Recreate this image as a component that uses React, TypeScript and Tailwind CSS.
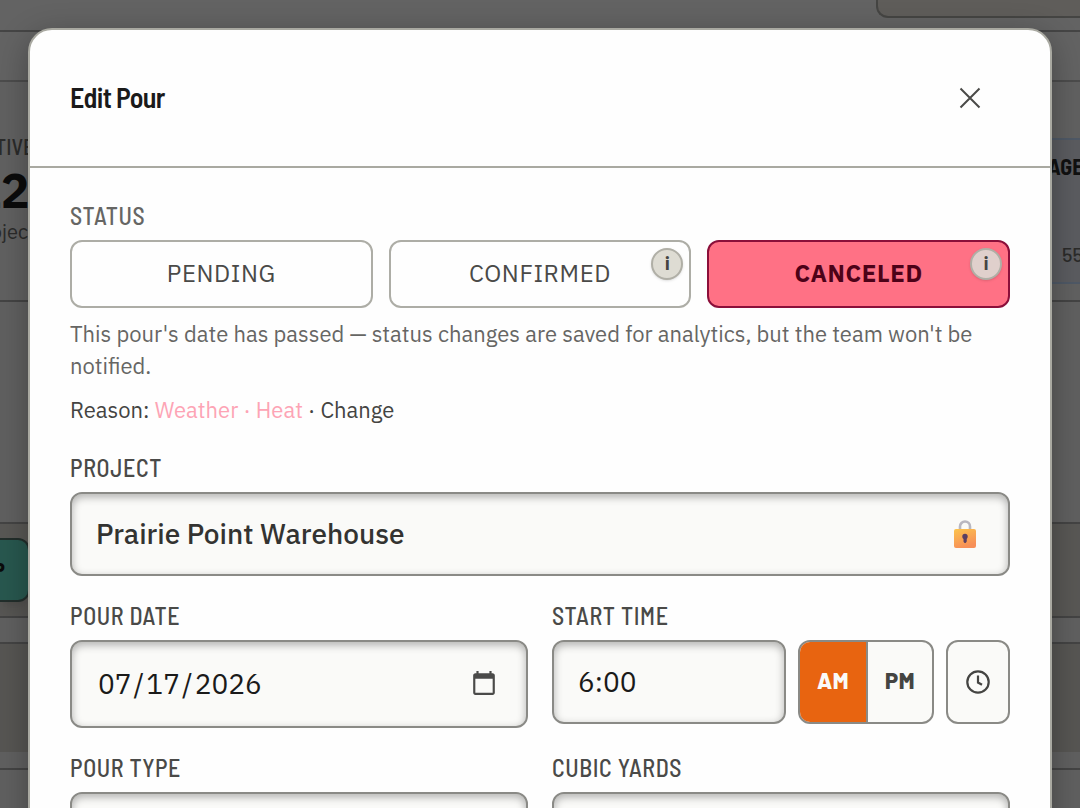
import type { ReactNode } from 'react'
import clsx from 'clsx'

const fontBody = "font-['IBM_Plex_Sans','Noto_Sans',sans-serif]"
const fontCondensed = "font-['Barlow_Semi_Condensed','Barlow_Condensed','Liberation_Sans_Narrow',sans-serif]"

const fieldBox =
  'w-full rounded-xl border-2 border-[#8a8a86] bg-[#fafaf8] px-6 text-[28px] text-[#1a1a1a] shadow-[inset_0_3px_8px_rgba(0,0,0,0.3)] outline-none'

// Chrome draws its own parts inside a date input
const datePicker =
  '[&::-webkit-datetime-edit-month-field]:px-0.5 [&::-webkit-datetime-edit-day-field]:px-0.5 [&::-webkit-datetime-edit-year-field]:px-0.5 [&::-webkit-calendar-picker-indicator]:mr-0.5 [&::-webkit-calendar-picker-indicator]:opacity-70'

const statuses = [
  { name: 'PENDING', info: false, active: false },
  { name: 'CONFIRMED', info: true, active: false },
  { name: 'CANCELED', info: true, active: true },
]

export default function App() {
  return (
    <div className={clsx('relative h-screen overflow-hidden bg-[#606060]', fontBody)}>
      <Backdrop />

      <div className="absolute inset-x-7 -bottom-10 top-7 overflow-hidden rounded-t-3xl border-2 border-[#a9a9a1] bg-[#fefefe] shadow-[0_8px_32px_rgba(0,0,0,0.3)]">
        {/* Header */}
        <header className="flex h-[138px] items-center justify-between border-b-2 border-[#a9a9a1] px-10">
          <h2 className={clsx('pb-0.5 text-[28px] font-semibold leading-8 tracking-tight text-[#1a1a1a]', fontCondensed)}>
            Edit Pour
          </h2>
          <button type="button" aria-label="Close" className="flex size-20 items-center justify-center">
            <svg viewBox="0 0 24 24" className="size-6" fill="none" stroke="#4a4a48" strokeWidth="2">
              <path d="M2.5 2.5l19 19M21.5 2.5l-19 19" />
            </svg>
          </button>
        </header>

        <form className="px-10 pt-8">
          {/* Status */}
          <Label muted>STATUS</Label>
          <div className="mt-2 grid grid-cols-3 gap-4">
            {statuses.map((s) => (
              <StatusButton key={s.name} {...s} />
            ))}
          </div>
          <p className="mt-2.5 text-[22px] leading-8 text-[#666664]">
            This pour's date has passed — status changes are saved for analytics, but the team won't be
            notified.
          </p>
          <p className="mt-3 text-[22px] leading-8 text-[#444442]">
            Reason: <span className="text-[#fda4b5]">Weather · Heat</span> ·{' '}
            <button type="button">Change</button>
          </p>

          {/* Project */}
          <div className="mt-[26px]">
            <Label htmlFor="project">PROJECT</Label>
            <div className="relative mt-2">
              <input
                id="project"
                readOnly
                defaultValue="Prairie Point Warehouse"
                className={clsx(fieldBox, 'h-[84px] pb-0.5 font-medium text-[#333331]')}
              />
              <LockIcon />
            </div>
          </div>

          <div className="mt-6 grid grid-cols-2 gap-6">
            <div>
              <Label htmlFor="date">POUR DATE</Label>
              <input
                id="date"
                type="date"
                defaultValue="2026-07-17"
                className={clsx(fieldBox, datePicker, 'mt-2 block h-[88px]')}
              />
            </div>
            <div>
              <Label htmlFor="time">START TIME</Label>
              <div className="mt-2 flex gap-3">
                <input
                  id="time"
                  defaultValue="6:00"
                  className={clsx(fieldBox, 'h-[84px] min-w-0 flex-1 pb-0.5')}
                />
                <div className="flex h-[84px] w-[136px] overflow-hidden rounded-xl border-2 border-[#8a8a86] bg-[#fafaf8] font-['Barlow',sans-serif] text-[22px] font-extrabold tracking-wide">
                  <button type="button" className="w-[68px] border-r-2 border-[#8a8a86] bg-[#e86410] pb-1 text-[#fafaf8]">
                    AM
                  </button>
                  <button type="button" className="flex-1 pb-1 text-[#444442]">
                    PM
                  </button>
                </div>
                <button
                  type="button"
                  aria-label="Pick a time"
                  className="flex h-[84px] w-16 items-center justify-center rounded-xl border-2 border-[#8a8a86] bg-[#fafaf8]"
                >
                  <svg viewBox="0 0 24 24" className="size-6" fill="none" stroke="#444442" strokeWidth="2.200">
                    <circle cx="12" cy="12" r="10.700" />
                    <path d="M12 5.500V12.500l4 2.300" />
                  </svg>
                </button>
              </div>
            </div>
            <div>
              <Label htmlFor="type">POUR TYPE</Label>
              <input id="type" className={clsx(fieldBox, 'mt-2 h-[84px]')} />
            </div>
            <div>
              <Label htmlFor="yards">CUBIC YARDS</Label>
              <input id="yards" className={clsx(fieldBox, 'mt-2 h-[84px]')} />
            </div>
          </div>
        </form>
      </div>
    </div>
  )
}

function Label({
  htmlFor,
  muted,
  children,
}: {
  htmlFor?: string
  muted?: boolean
  children: ReactNode
}) {
  return (
    <label
      htmlFor={htmlFor}
      className={clsx(
        'block text-2xl font-medium leading-8 tracking-wide',
        fontCondensed,
        muted ? 'text-[#666664]' : 'text-[#4a4a48]',
      )}
    >
      {children}
    </label>
  )
}

function StatusButton({ name, info, active }: { name: string; info: boolean; active: boolean }) {
  return (
    <div className="relative">
      <button
        type="button"
        className={clsx(
          'h-[68px] w-full rounded-xl border-2 pb-0.5 text-2xl tracking-wide',
          active
            ? 'border-[#8b0f3a] bg-[#ff7185] font-bold text-[#4d0218]'
            : 'border-[#adada6] text-[#4a4a48]',
        )}
      >
        {name}
      </button>
      {info && (
        <button
          type="button"
          aria-label={`About ${name.toLowerCase()}`}
          className={clsx(
            'absolute right-2 top-2 flex size-8 items-center justify-center rounded-full border-2 border-[#b0afa6] text-lg font-bold text-[#444442] shadow',
            active ? 'bg-[#e0d0cc]' : 'bg-[#dedcd3]',
          )}
        >
          i
        </button>
      )}
    </div>
  )
}

function LockIcon() {
  return (
    <svg viewBox="1 0 24 30" className="absolute right-8 top-7 h-[30px] w-6" fill="none">
      <defs>
        <linearGradient id="lock-body" x1="0" y1="0" x2="0.4" y2="1">
          <stop offset="0" stopColor="#fcc44d" />
          <stop offset="1" stopColor="#f78f58" />
        </linearGradient>
      </defs>
      <path d="M7 11V6.500a5 5 0 0 1 10 0V11" stroke="#b9b7c0" strokeWidth="2.600" />
      <rect x="1" y="9" width="22" height="19" rx="2" fill="url(#lock-body)" />
      <circle cx="12" cy="16.500" r="2.700" fill="#5a3f63" />
      <path d="M11 17h2.200v4.500a1.100 1.100 0 0 1-2.200 0z" fill="#5a3f63" stroke="#5a3f63" />
    </svg>
  )
}

/* Dimmed dashboard behind the dialog */
function Backdrop() {
  return (
    <div aria-hidden="true" className="flex h-full flex-col text-[#2b2b2a]">
      <div className="flex h-8 justify-end border-b-2 border-[#454545] bg-[#636363]">
        <div className="h-[18px] w-[204px] rounded-bl-xl border-b-2 border-l-2 border-[#454543] bg-[#5f5d5a]" />
      </div>
      <div className="h-[50px] border-b-2 border-[#4c4c4c] bg-[#636363]" />
      <div className="flex h-[220px] justify-between border-b-2 border-[#444444] bg-[#616161] pt-14">
        <div className="-ml-7">
          <p className={clsx('text-[22px] font-medium leading-4', fontCondensed)}>ACTIVE</p>
          <p className="mt-3 text-5xl font-bold text-[#0b0b0b]">12</p>
          <p className="mt-1 text-xl">projects</p>
        </div>
        <div className="h-[146px] w-12 border-y-2 border-[#4f5966] bg-[#5b5c60] pt-3.5">
          <p className={clsx('pl-4 text-[22px] font-bold leading-6 text-[#111111]', fontCondensed)}>AGE</p>
          <p className="mt-16 pl-[30px] font-['Barlow',sans-serif] text-xl font-medium leading-6">55</p>
        </div>
      </div>
      <div className="h-[222px] border-b-2 border-[#444444] bg-[#606060]" />
      <div className="h-[94px] border-b-2 border-[#444444] bg-[#595855] pt-3.5">
        <div className="flex h-16 w-[30px] items-center overflow-hidden rounded-r-xl border-2 border-l-0 border-[#222e2b] bg-[#28584f] text-xl font-bold text-[#0b0b0b] shadow-lg">
          <span className="-ml-2">P</span>
        </div>
      </div>
      <div className="h-[26px] border-b-2 border-[#444444] bg-[#606060]" />
      <div className="h-[108px] bg-[#575653]" />
      <div className="h-[18px] border-b-2 border-[#444444] bg-[#606060]" />
    </div>
  )
}
